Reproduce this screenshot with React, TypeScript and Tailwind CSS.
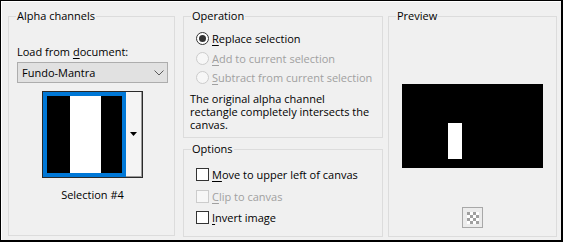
import type { ReactNode } from 'react';

function Key({ children }: { children: ReactNode }) {
  return <span className="underline underline-offset-[2px]">{children}</span>;
}

function Group({ label, className, children }: { label: string; className: string; children: ReactNode }) {
  return (
    <fieldset className={`border border-[#dcdcdc] ${className}`}>
      <legend className="ml-[7px] px-[1px] leading-4">{label}</legend>
      {children}
    </fieldset>
  );
}

function Radio({ checked, disabled, children }: { checked?: boolean; disabled?: boolean; children: ReactNode }) {
  return (
    <div className={`flex items-center h-[19.5px] ${disabled ? 'text-[#a0a0a0]' : ''}`}>
      <span
        className={`w-[13px] h-[13px] rounded-full border flex items-center justify-center ${
          disabled ? 'border-[#cccccc] bg-[#f7f7f7]' : 'border-[#333333] bg-white'
        }`}
      >
        {checked && <span className="w-[7px] h-[7px] rounded-full bg-[#333333]" />}
      </span>
      <span className="ml-[3px]">{children}</span>
    </div>
  );
}

function Check({ disabled, children }: { disabled?: boolean; children: ReactNode }) {
  return (
    <div className={`flex items-center h-[21.5px] ${disabled ? 'text-[#a0a0a0]' : ''}`}>
      <span
        className={`w-[13px] h-[13px] border ${
          disabled ? 'border-[#cccccc] bg-[#f7f7f7]' : 'border-[#333333] bg-white'
        }`}
      />
      <span className="ml-[3px]">{children}</span>
    </div>
  );
}

const checker = [0, 1, 2, 3].flatMap((r) => [0, 1, 2, 3].map((c) => (r + c) % 2 === 0));

export default function App() {
  return (
    <div className="w-[563px] h-[243px] bg-white font-['Open_Sans',sans-serif] text-[11px] leading-[15px] text-black">
      <div className="w-[563px] h-[242px] border-l border-t border-r-2 border-b-2 border-black bg-[#f0f0f0]">
        <div className="h-full border-l border-t border-white pl-[6px] pt-[6px] flex gap-[8px]">
          {/* Alpha channels */}
          <Group label="Alpha channels" className="w-[167px] h-[228px] flex flex-col">
            <div className="mt-[20px] pl-[8px]">
              Load from <Key>d</Key>ocument:
            </div>
            <div className="mt-[3px] ml-[8px] w-[151px] h-[21px] bg-[#e1e1e1] border border-[#adadad] flex items-center justify-between pl-[4px] pr-[3px]">
              <span>Fundo-Mantra</span>
              <svg width="10" height="6" viewBox="0 0 10 6">
                <polyline points="0.5,0.5 5,5 9.5,0.5" fill="none" stroke="#5a5a5a" strokeWidth="1" />
              </svg>
            </div>
            <div className="mt-[8px] ml-[33px] w-[101px] h-[87px] flex border border-[#2a2a2a]">
              <div className="w-[83px] h-full border-[4px] border-[#0078d7] flex">
                <div className="w-[23px] bg-black" />
                <div className="w-[31px] bg-white" />
                <div className="flex-1 bg-black" />
              </div>
              <div className="flex-1 bg-[#f4f4f4] border-r border-b border-[#9a9a9a] flex items-center justify-center">
                <svg width="7" height="4" viewBox="0 0 7 4">
                  <polygon points="0,0 7,0 3.5,4" fill="#000" />
                </svg>
              </div>
            </div>
            <div className="mt-[9px] ml-[33px] w-[101px] text-center">Selection #4</div>
          </Group>

          {/* Operation + Options */}
          <div className="flex flex-col gap-[3px]">
            <Group label="Operation" className="w-[200px] h-[130px]">
              <div className="mt-[5px] pl-[12px]">
                <Radio checked>
                  <Key>R</Key>eplace selection
                </Radio>
                <Radio disabled>
                  <Key>A</Key>dd to current selection
                </Radio>
                <Radio disabled>
                  <Key>S</Key>ubtract from current selection
                </Radio>
              </div>
              <p className="mt-[4px] pl-[6px] pr-[4px] leading-[13px]">
                The original alpha channel
                <br />
                rectangle completely intersects the
                <br />
                canvas.
              </p>
            </Group>
            <Group label="Options" className="w-[200px] h-[96px]">
              <div className="mt-[7px] pl-[12px]">
                <Check>
                  <Key>M</Key>ove to upper left of canvas
                </Check>
                <Check disabled>
                  <Key>C</Key>lip to canvas
                </Check>
                <Check>
                  <Key>I</Key>nvert image
                </Check>
              </div>
            </Group>
          </div>

          {/* Preview */}
          <Group label="Preview" className="ml-[-3px] w-[169px] h-[229px] flex flex-col items-center">
            <svg className="mt-[60px]" width="141" height="84" viewBox="0 0 141 84">
              <rect width="141" height="84" fill="#000" />
              <rect x="46" y="39" width="14" height="36" fill="#fff" />
            </svg>
            <div className="mt-[39px] w-[21px] h-[21px] border border-[#a8a8a8] bg-[#ececec] flex items-center justify-center">
              <div className="grid grid-cols-4 w-[12px] h-[12px]">
                {checker.map((dark, i) => (
                  <div key={i} className={dark ? 'bg-[#a0a0a0]' : 'bg-white'} />
                ))}
              </div>
            </div>
          </Group>
        </div>
      </div>
    </div>
  );
}
